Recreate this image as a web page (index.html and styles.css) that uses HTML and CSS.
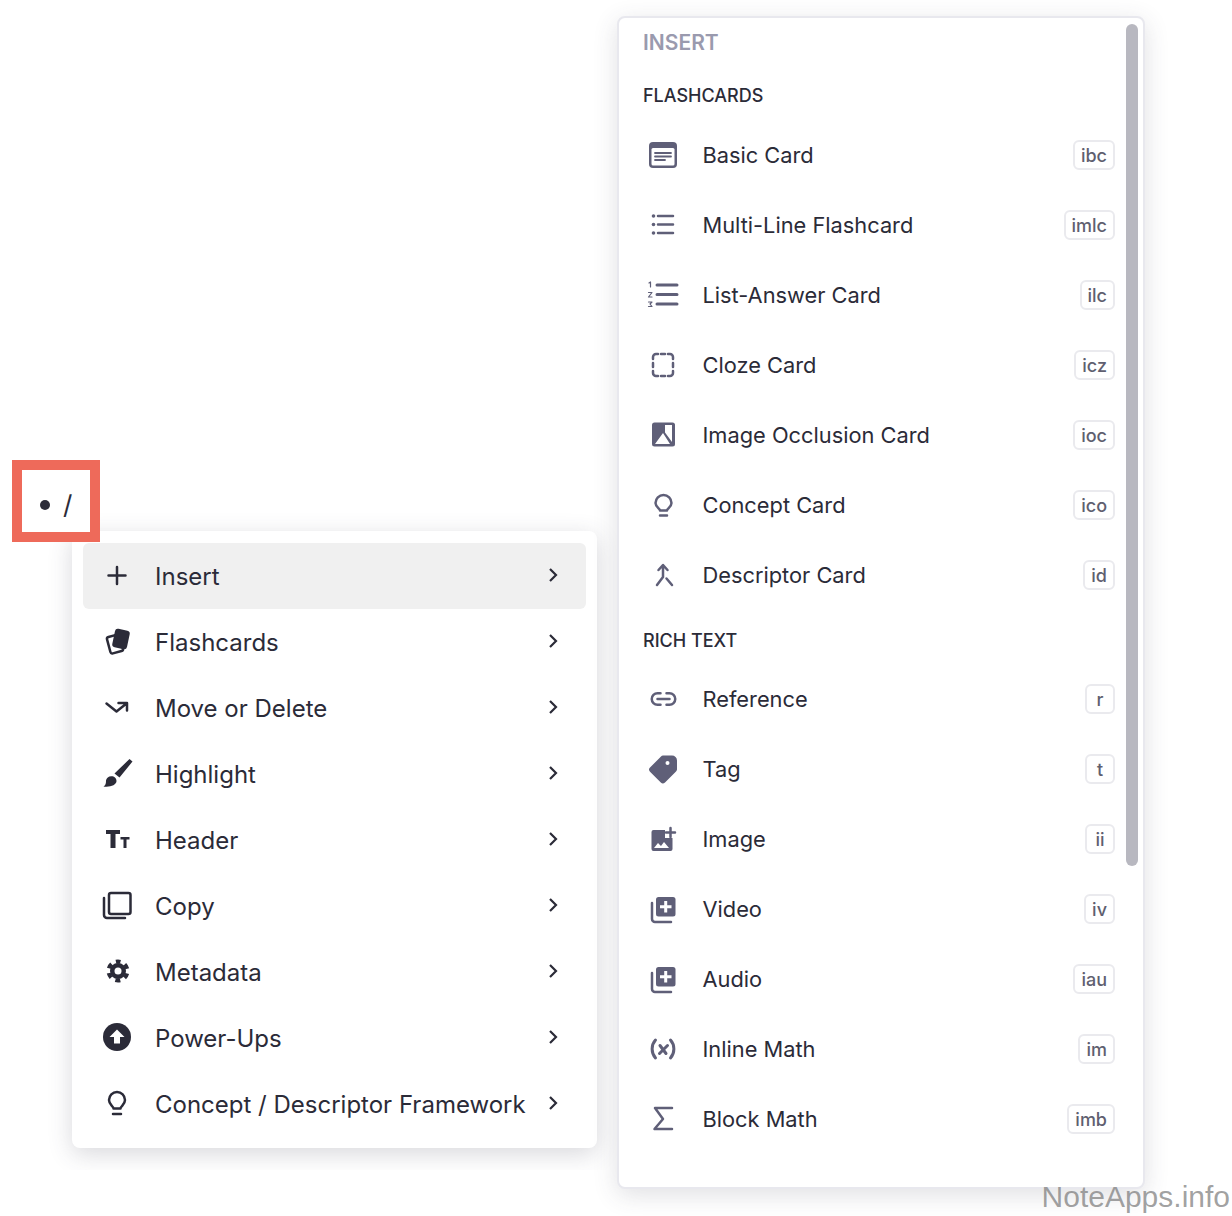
FILE: index.html
```html
<!DOCTYPE html>
<html lang="en">

<head>
    <meta charset="UTF-8">
    <meta name="viewport" content="width=device-width, initial-scale=1.0">
    <title>Slash menu</title>
    <link rel="stylesheet" href="styles.css">
</head>

<body>
    <!-- the typed bullet, boxed in red -->
    <div class="slash-box">
        <span class="bullet"></span>
        <span class="slash">/</span>
    </div>

    <!-- first level menu -->
    <div class="menu">
        <div class="menu-row active">
            <svg class="icon" viewBox="0 0 32 32"><path class="line" d="M16 7v17M7.500 15.500h17"/></svg>
            <span class="menu-label">Insert</span>
            <svg class="chevron" viewBox="0 0 16 16"><path d="M5 2l6 6-6 6"/></svg>
        </div>
        <div class="menu-row">
            <svg class="icon" viewBox="0 0 32 32"><rect class="line" x="7.500" y="9.500" width="13" height="17" rx="2" transform="rotate(-15 14 18)"/><rect class="solid" x="12.500" y="3.500" width="15" height="19" rx="3" transform="rotate(12 20 13)"/></svg>
            <span class="menu-label">Flashcards</span>
            <svg class="chevron" viewBox="0 0 16 16"><path d="M5 2l6 6-6 6"/></svg>
        </div>
        <div class="menu-row">
            <svg class="icon" viewBox="0 0 32 32"><path class="line" d="M5.500 11.500l10 8 10-8M17.500 11h8.500v7.500"/></svg>
            <span class="menu-label">Move or Delete</span>
            <svg class="chevron" viewBox="0 0 16 16"><path d="M5 2l6 6-6 6"/></svg>
        </div>
        <div class="menu-row">
            <svg class="icon" viewBox="0 0 32 32"><path class="solid" d="M28.500 1l3 2.500-13 16-5-4zM9 18.500c3-1 6.500 1 6.500 4.500 0 4-6.500 6.500-13 5.500 2-1 2.500-3 2.500-5.500 0-2 2-4.500 4-4.500z"/></svg>
            <span class="menu-label">Highlight</span>
            <svg class="chevron" viewBox="0 0 16 16"><path d="M5 2l6 6-6 6"/></svg>
        </div>
        <div class="menu-row">
            <svg class="icon" viewBox="0 0 32 32"><path class="solid" d="M5 6h14v4h-4.500v14h-5v-14h-4.500zM19.500 13h9v2.500h-3v8.500h-3v-8.500h-3z"/></svg>
            <span class="menu-label">Header</span>
            <svg class="chevron" viewBox="0 0 16 16"><path d="M5 2l6 6-6 6"/></svg>
        </div>
        <div class="menu-row">
            <svg class="icon" viewBox="0 0 32 32"><rect class="line" x="8" y="3" width="21.500" height="21" rx="2"/><path class="line" d="M3 8v17a3 3 0 0 0 3 3h18"/></svg>
            <span class="menu-label">Copy</span>
            <svg class="chevron" viewBox="0 0 16 16"><path d="M5 2l6 6-6 6"/></svg>
        </div>
        <div class="menu-row">
            <svg class="icon" viewBox="0 0 32 32"><circle class="solid" cx="17" cy="15" r="8"/><circle class="teeth" cx="17" cy="15" r="9.500" transform="rotate(-90 17 15)"/><circle class="hole" cx="17" cy="15" r="3.500"/></svg>
            <span class="menu-label">Metadata</span>
            <svg class="chevron" viewBox="0 0 16 16"><path d="M5 2l6 6-6 6"/></svg>
        </div>
        <div class="menu-row">
            <svg class="icon" viewBox="0 0 32 32"><circle class="solid" cx="16" cy="15" r="14"/><path class="hole" d="M16 7.500l7.500 7.500h-4.500v6.500h-6v-6.500h-4.500z"/></svg>
            <span class="menu-label">Power-Ups</span>
            <svg class="chevron" viewBox="0 0 16 16"><path d="M5 2l6 6-6 6"/></svg>
        </div>
        <div class="menu-row">
            <svg class="icon" viewBox="0 0 32 32"><path class="line" d="M12.500 20.500c0-2.500-4.500-3.500-4.500-8.500a8 8 0 0 1 16 0c0 5-4.500 6-4.500 8.500zM12 26h8"/></svg>
            <span class="menu-label">Concept / Descriptor Framework</span>
            <svg class="chevron" viewBox="0 0 16 16"><path d="M5 2l6 6-6 6"/></svg>
        </div>
    </div>

    <!-- insert submenu -->
    <div class="panel">
        <div class="scroll-thumb"></div>
        <div class="panel-title">INSERT</div>

        <div class="group-title">FLASHCARDS</div>
        <div class="panel-row">
            <svg class="icon sub" viewBox="0 0 32 32"><rect class="solid" x="2" y="3" width="28" height="26" rx="4"/><rect class="hole" x="4.500" y="9" width="23" height="17.500" rx="1.500"/><path class="line fine" d="M8 14h16M8 17.500h16M8 21h10"/></svg>
            <span class="panel-label">Basic Card</span>
            <span class="key">ibc</span>
        </div>
        <div class="panel-row">
            <svg class="icon sub" viewBox="0 0 32 32"><path class="line" d="M11 7h15M11 15.500h15M11 24h15"/><circle class="solid" cx="6.500" cy="7" r="1.800"/><circle class="solid" cx="6.500" cy="15.500" r="1.800"/><circle class="solid" cx="6.500" cy="24" r="1.800"/></svg>
            <span class="panel-label">Multi-Line Flashcard</span>
            <span class="key">imlc</span>
        </div>
        <div class="panel-row">
            <svg class="icon sub" viewBox="0 0 32 32"><path class="line thick" d="M10 6h20M10 15.500h20M10 25h20"/><path class="line thin" d="M2 4l1.500-1v5M1.500 13.500h3.500l-3.500 4.500h3.500M1.500 23h3.500l-2 2 2 2.500h-3.500"/></svg>
            <span class="panel-label">List-Answer Card</span>
            <span class="key">ilc</span>
        </div>
        <div class="panel-row">
            <svg class="icon sub" viewBox="0 0 32 32"><path class="line" d="M6 10v-2a3 3 0 0 1 3-3h2M21 5h2a3 3 0 0 1 3 3v2M26 22v2a3 3 0 0 1-3 3h-2M11 27h-2a3 3 0 0 1-3-3v-2M14 5h4M14 27h4M6 14v4M26 14v4"/></svg>
            <span class="panel-label">Cloze Card</span>
            <span class="key">icz</span>
        </div>
        <div class="panel-row">
            <svg class="icon sub" viewBox="0 0 32 32"><rect class="solid" x="5" y="3.500" width="23" height="24" rx="2.500"/><path class="hole" d="M18 6h7v17l-7-9.500zM8 25l8-11 7 11z"/></svg>
            <span class="panel-label">Image Occlusion Card</span>
            <span class="key">ioc</span>
        </div>
        <div class="panel-row">
            <svg class="icon sub" viewBox="0 0 32 32"><path class="line" d="M13 21.500c0-2-4.500-3.500-4.500-7.500a8 8 0 0 1 16 0c0 4-4.500 5.500-4.500 7.500zM13 26.500h7"/></svg>
            <span class="panel-label">Concept Card</span>
            <span class="key">ico</span>
        </div>
        <div class="panel-row">
            <svg class="icon sub" viewBox="0 0 32 32"><path class="line" d="M16 7v11l-6 8M19.500 19.500l5.500 6.500M11.500 11l4.500-5 4.500 5"/></svg>
            <span class="panel-label">Descriptor Card</span>
            <span class="key">id</span>
        </div>

        <div class="group-title rich">RICH TEXT</div>
        <div class="panel-row">
            <svg class="icon sub" viewBox="0 0 32 32"><path class="line" d="M13.500 10.250h-3a5.750 5.750 0 0 0 0 11.500h3M19.500 10.250h3a5.750 5.750 0 0 1 0 11.500h-3M10.500 16h12"/></svg>
            <span class="panel-label">Reference</span>
            <span class="key">r</span>
        </div>
        <div class="panel-row">
            <svg class="icon sub" viewBox="0 0 32 32"><path class="solid" d="M16 2.500h9a5 5 0 0 1 5 5v9a3 3 0 0 1-1 2l-11 11a3 3 0 0 1-4.200 0l-10.800-10.800a3 3 0 0 1 0-4.200l11-11a3 3 0 0 1 2-1z"/><circle class="hole" cx="20.500" cy="10" r="2"/></svg>
            <span class="panel-label">Tag</span>
            <span class="key">t</span>
        </div>
        <div class="panel-row">
            <svg class="icon sub" viewBox="0 0 32 32"><path class="solid" d="M6.500 7h11.500v8h7.500v11a2 2 0 0 1-2 2h-17a2 2 0 0 1-2-2v-17a2 2 0 0 1 2-2z"/><path class="hole" d="M7 25l4-5 3 3 3-4 5 6z"/><path class="line" d="M23.500 5v9M19 9.500h9"/></svg>
            <span class="panel-label">Image</span>
            <span class="key">ii</span>
        </div>
        <div class="panel-row">
            <svg class="icon sub" viewBox="0 0 32 32"><rect class="solid" x="9" y="4" width="19.500" height="19.500" rx="2.500"/><path class="line white" d="M18.700 8v11.500M13 13.700h11.500"/><path class="line" d="M5 10v16a3 3 0 0 0 3 3h16"/></svg>
            <span class="panel-label">Video</span>
            <span class="key">iv</span>
        </div>
        <div class="panel-row">
            <svg class="icon sub" viewBox="0 0 32 32"><rect class="solid" x="9" y="4" width="19.500" height="19.500" rx="2.500"/><path class="line white" d="M18.700 8v11.500M13 13.700h11.500"/><path class="line" d="M5 10v16a3 3 0 0 0 3 3h16"/></svg>
            <span class="panel-label">Audio</span>
            <span class="key">iau</span>
        </div>
        <div class="panel-row">
            <svg class="icon sub" viewBox="0 0 32 32"><path class="line thick" d="M8.500 7c-4.500 5-4.500 13 0 18M23.500 7c4.500 5 4.500 13 0 18"/><path class="line thick" d="M13 12.500l6 8M20.500 12.500l-8 8"/></svg>
            <span class="panel-label">Inline Math</span>
            <span class="key">im</span>
        </div>
        <div class="panel-row">
            <svg class="icon sub" viewBox="0 0 32 32"><path class="line" d="M25 5h-17l8 11-8.500 10h17.500"/></svg>
            <span class="panel-label">Block Math</span>
            <span class="key">imb</span>
        </div>
    </div>

    <div class="watermark">NoteApps.info</div>
</body>

</html>
```
FILE: styles.css
```css
* {
    margin: 0;
    padding: 0;
    box-sizing: border-box;
}

body {
    width: 1232px;
    height: 1216px;
    position: relative;
    overflow: hidden;
    background-color: white;
    font-family: Inter, "Liberation Sans", sans-serif;
    color: #2b2b38;
}

/* red box round the bullet */
.slash-box {
    position: absolute;
    left: 12px;
    top: 460px;
    width: 88px;
    height: 82px;
    border: 10px solid #ee6a5a;
    background-color: white;
    display: flex;
    align-items: center;
    z-index: 2;
    padding-left: 18px;
    padding-top: 8px;
    gap: 13px;
}

.bullet {
    width: 10px;
    height: 10px;
    border-radius: 50%;
    background-color: #2b2b38;
}

.slash {
    font-size: 26px;
    line-height: 30px;
}

/* left menu */
.menu {
    position: absolute;
    left: 72px;
    top: 531px;
    width: 525px;
    height: 617px;
    padding: 12px 11px;
    background-color: white;
    border-radius: 8px;
    box-shadow: 0 6px 24px rgba(60, 60, 80, 0.2);
    clip-path: inset(-30px -30px -22px -30px);
}

.menu-row {
    height: 66px;
    display: flex;
    align-items: center;
    padding-left: 18px;
    padding-right: 25px;
    border-radius: 6px;
}

.menu-row.active {
    background-color: #f0f0f0;
}

.menu-label {
    flex: 1;
    margin-left: 22px;
    font-size: 24px;
}

.chevron {
    width: 16px;
    height: 16px;
    margin-top: -3px;
    fill: none;
    stroke: #2b2b38;
    stroke-width: 2.200;
}

/* icons share the same class names, the colour comes from .icon or .sub */
.icon {
    width: 32px;
    height: 32px;
    flex-shrink: 0;
    color: #2b2b38;
}

.icon.sub {
    color: #5f5f78;
}

.line {
    fill: none;
    stroke: currentColor;
    stroke-width: 2.500;
    stroke-linecap: round;
    stroke-linejoin: round;
}

.line.fine {
    stroke-width: 1.800;
}

.line.thick {
    stroke-width: 3;
}

.line.thin {
    stroke-width: 1.200;
}

.line.white {
    stroke: white;
    stroke-width: 3;
    stroke-linecap: butt;
}

.solid {
    fill: currentColor;
}

.hole {
    fill: white;
}

.teeth {
    fill: none;
    stroke: currentColor;
    stroke-width: 4;
    stroke-dasharray: 5 4.950;
    stroke-dashoffset: 2.500;
}

/* right panel */
.panel {
    position: absolute;
    left: 617px;
    top: 16px;
    width: 528px;
    height: 1173px;
    padding: 0 28px 0 24px;
    background-color: white;
    border: 2px solid #e8e8ee;
    border-radius: 8px;
    box-shadow: 0 6px 24px rgba(60, 60, 80, 0.16);
}

.scroll-thumb {
    position: absolute;
    right: 5px;
    top: 6px;
    width: 12px;
    height: 842px;
    border-radius: 6px;
    background-color: #b8b8c0;
}

.panel-title {
    height: 48px;
    display: flex;
    align-items: center;
    font-size: 21px;
    font-weight: 600;
    color: #9a9aae;
}

.group-title {
    height: 54px;
    padding-top: 4px;
    display: flex;
    align-items: center;
    font-size: 18px;
    font-weight: 500;
    color: #2b2b38;
}

.group-title.rich {
    height: 48px;
    padding-top: 0;
    margin-top: 6px;
}

.panel-row {
    height: 70px;
    display: flex;
    align-items: center;
    padding-left: 4px;
}

.panel-label {
    flex: 1;
    margin-left: 23.500px;
    font-size: 21.800px;
}

.key {
    height: 30px;
    min-width: 30px;
    padding: 0 6px;
    display: flex;
    align-items: center;
    justify-content: center;
    font-size: 18px;
    font-weight: 500;
    color: #5f5f70;
    border: 2px solid #eaeaee;
    border-radius: 6px;
}

.watermark {
    position: absolute;
    right: 2px;
    top: 1178px;
    font-family: "Liberation Sans", Arial, sans-serif;
    font-size: 30px;
    line-height: 38px;
    color: rgba(120, 120, 120, 0.7);
    z-index: 3;
}
```
